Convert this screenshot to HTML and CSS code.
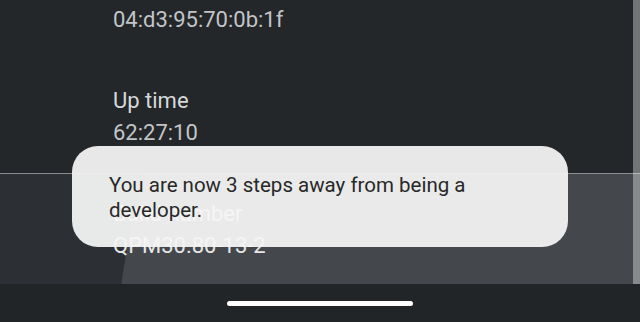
FILE: index.html
```html
<!DOCTYPE html>
<html>
<head>
<meta charset="utf-8">
<link rel="stylesheet" href="styles.css">
</head>
<body>
<div class="screen">
  <div class="content">
    <div class="list">
      <div class="item first">
        <div class="summary">04:d3:95:70:0b:1f</div>
      </div>
      <div class="item">
        <div class="title">Up time</div>
        <div class="summary">62:27:10</div>
      </div>
      <div class="item pressed">
        <div class="ripple"></div>
        <div class="title">Build number</div>
        <div class="summary">QPM30.80-13-2</div>
      </div>
    </div>
    <div class="scrollbar"></div>
    <div class="toast">You are now 3 steps away from being a developer.</div>
  </div>
  <div class="navbar">
    <div class="home-pill"></div>
  </div>
</div>
</body>
</html>
```
FILE: styles.css
```css
html, body {
  margin: 0;
  padding: 0;
  background: #23272a;
}
body {
  width: 640px;
  height: 322px;
  overflow: hidden;
  font-family: Roboto, "Noto Sans", sans-serif;
}
.screen {
  display: flex;
  flex-direction: column;
  height: 322px;
}
.content {
  position: relative;
  height: 284px;
  overflow: hidden;
  background: #23272a;
}
.list {
  display: flex;
  flex-direction: column;
  margin-top: -21px;
}
.item {
  position: relative;
  box-sizing: border-box;
  height: 113px;
  padding: 24.5px 0 24.5px 113px;
  font-size: 22px;
  line-height: 32px;
}
.item.first {
  height: 81px;
}
.title {
  position: relative;
  color: #d6d9db;
}
.summary {
  position: relative;
  color: #c2c5c7;
}
.pressed {
  background: #2c3034;
  border-top: 1px solid #8a8d90;
  padding-top: 23.5px;
  overflow: hidden;
}
.pressed .title {
  color: #f4f4f4;
}
.pressed .summary {
  color: #e6e6e6;
}
.ripple {
  position: absolute;
  left: 116px;
  top: -410px;
  width: 1200px;
  height: 1200px;
  border-radius: 50%;
  background: #44484c;
}
.scrollbar {
  position: absolute;
  right: 0;
  top: 0;
  width: 7px;
  height: 284px;
  background: rgba(255, 255, 255, 0.36);
}
.toast {
  position: absolute;
  left: 72px;
  top: 146px;
  width: 496px;
  height: 101px;
  box-sizing: border-box;
  padding: 27px 60px 0 37px;
  border-radius: 26px;
  background: rgba(244, 244, 244, 0.94);
  color: #282828;
  font-size: 20.5px;
  line-height: 25px;
}
.navbar {
  flex: 1;
  background: #212528;
  display: flex;
  justify-content: center;
  padding-top: 17px;
  box-sizing: border-box;
}
.home-pill {
  width: 186px;
  height: 5px;
  border-radius: 3px;
  background: #ffffff;
}
```
